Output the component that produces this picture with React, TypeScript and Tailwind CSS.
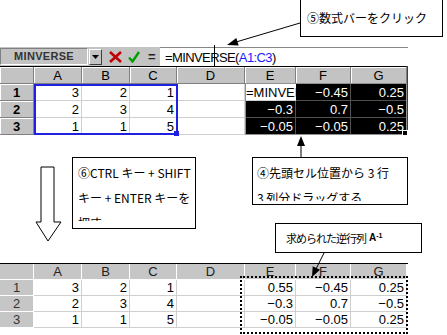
import React from "react";

const COLS = "grid grid-cols-[34px_48px_48px_47px_68px_51px_55px_56px]";
const JP = "font-['Noto_Sans_CJK_JP','Noto_Sans_CJK_SC',sans-serif]";

const letters = ["A", "B", "C", "D", "E", "F", "G"];
const leftData = [
  ["3", "2", "1"],
  ["2", "3", "4"],
  ["1", "1", "5"],
];
const inv = [
  ["0.55", "−0.45", "0.25"],
  ["−0.3", "0.7", "−0.5"],
  ["−0.05", "−0.05", "0.25"],
];

function TopSheet() {
  return (
    <div className="relative w-[408px] border-r-2 border-[#404040]">
      <div className={`${COLS} h-[18px] border-t border-black`}>
        <div className="bg-[#c3c3c3] border-r border-b border-[#808080] shadow-[inset_1px_1px_0_#fff]" />
        {letters.map((l) => (
          <div
            key={l}
            className="bg-[#c3c3c3] border-r border-b border-[#808080] shadow-[inset_1px_1px_0_#fff] flex items-center justify-center text-[13px] leading-none text-black"
          >
            {l}
          </div>
        ))}
      </div>
      {leftData.map((row, r) => (
        <div key={r} className={`${COLS} h-[17px]`}>
          <div className="bg-[#c3c3c3] border-r border-b border-[#808080] shadow-[inset_1px_1px_0_#fff] flex items-center justify-center text-[13px] font-bold leading-none">
            {r + 1}
          </div>
          {row.map((v, c) => (
            <div
              key={c}
              className="bg-white border-r border-b border-[#cfcfcf] flex items-center justify-end pr-[2px] text-[13px] leading-none"
            >
              {v}
            </div>
          ))}
          <div className="bg-white border-r border-b border-[#cfcfcf]" />
          {inv[r].map((v, c) =>
            r === 0 && c === 0 ? (
              <div
                key={c}
                className="bg-white border-b border-[#cfcfcf] overflow-hidden whitespace-nowrap flex items-center text-[13px] leading-none pl-[1px]"
              >
                =MINVERSE(A1:C3)
              </div>
            ) : (
              <div
                key={c}
                className="bg-black text-white border-r border-b border-[#505050] flex items-center justify-end pr-[2px] text-[13px] leading-none"
              >
                {v}
              </div>
            )
          )}
        </div>
      ))}
      {/* selection A1:C3 */}
      <div className="absolute left-[34px] top-[18px] w-[144px] h-[51px] border-2 border-[#2020e0] pointer-events-none" />
      <div className="absolute left-[174px] top-[65px] w-[5px] h-[5px] bg-[#2020e0]" />
      {/* selection E1:G3 */}
      <div className="absolute left-[245px] top-[17px] w-[162px] h-[52px] border border-[#909090] pointer-events-none" />
      <div className="absolute left-[402px] top-[64px] w-[6px] h-[6px] bg-black border border-white" />
    </div>
  );
}

function BottomSheet() {
  return (
    <div className="relative w-[408px] border-t border-black">
      <div className={`${COLS} h-[16px]`}>
        <div className="bg-[#c6c6c6] border-r border-b border-white" />
        {letters.map((l) => (
          <div
            key={l}
            className="bg-[#c6c6c6] border-r border-b border-white flex items-center justify-center text-[13px] leading-none text-[#222]"
          >
            {l}
          </div>
        ))}
      </div>
      {leftData.map((row, r) => (
        <div key={r} className={`${COLS} h-[16px]`}>
          <div className="bg-[#c6c6c6] border-r border-b border-white flex items-center justify-center text-[13px] leading-none text-[#333]">
            {r + 1}
          </div>
          {row.map((v, c) => (
            <div
              key={c}
              className="bg-white border-r border-b border-[#cfcfcf] flex items-center justify-end pr-[2px] text-[13px] leading-none"
            >
              {v}
            </div>
          ))}
          <div className="bg-white border-r border-b border-[#cfcfcf]" />
          {inv[r].map((v, c) => (
            <div
              key={c}
              className="bg-white border-r border-b border-[#cfcfcf] flex items-center justify-end pr-[2px] text-[13px] leading-none"
            >
              {v}
            </div>
          ))}
        </div>
      ))}
    </div>
  );
}

function FormulaBar() {
  return (
    <div className="flex h-[19px] w-[408px]">
      <div className="flex items-center w-[160px] bg-[#c3c3c3]">
        <div className="w-[88px] h-[17px] border border-t-[#808080] border-l-[#808080] border-b-white border-r-white flex items-center justify-center text-[11px] font-bold text-[#333] tracking-[0.3px]">
          MINVERSE
        </div>
        <div className="ml-[1px] w-[13px] h-[16px] bg-[#c3c3c3] border border-t-white border-l-white border-b-[#404040] border-r-[#404040] flex items-center justify-center">
          <svg width="7" height="4" viewBox="0 0 7 4">
            <polygon points="0,0 7,0 3.5,4" fill="black" />
          </svg>
        </div>
        <div className="ml-[6px] w-[14px] flex items-center justify-center">
          <svg width="13" height="12" viewBox="0 0 13 12">
            <path d="M1 1 L12 11 M12 1 L1 11" stroke="#c00000" strokeWidth="2.6" />
          </svg>
        </div>
        <div className="ml-[5px] w-[13px] flex items-center justify-center">
          <svg width="12" height="12" viewBox="0 0 12 12">
            <path d="M1 6.5 L4.5 10.5 L11 1" stroke="#00a000" strokeWidth="2.4" fill="none" />
          </svg>
        </div>
        <div className="ml-[8px] text-[13px] font-bold text-[#222] leading-none">=</div>
      </div>
      <div className="flex-1 bg-white border-t border-[#888] flex items-center pl-[5px] text-[13px] tracking-[-0.6px] leading-none whitespace-nowrap">
        <span>=MINVERSE(</span>
        <span className="text-[#1a1aff]">A1:C3</span>
        <span>)</span>
      </div>
    </div>
  );
}

export default function App() {
  return (
    <div className="relative w-[447px] h-[335px] bg-white overflow-hidden font-['Liberation_Sans',Arial,sans-serif] text-black">
      <div className="h-[47px]" />
      <FormulaBar />
      <TopSheet />
      <div className="h-[128px]" />
      <BottomSheet />

      {/* cursor I-beam */}
      <div className="absolute left-[214px] top-[45px] w-[1px] h-[22px] bg-black" />

      {/* callout ⑤ */}
      <div className={`absolute left-[300px] top-[-1px] w-[143px] h-[38px] bg-white border border-black flex items-center pl-[6px] text-[12px] leading-none ${JP}`}>
        ⑤数式バーをクリック
      </div>

      {/* callout ④ */}
      <div className={`absolute left-[252px] top-[157px] w-[156px] h-[48px] bg-white border border-black pl-[4px] text-[12px] leading-[25px] ${JP}`}>
        <div className="h-[43px] overflow-hidden pt-[2px]">
          <div className="whitespace-nowrap">④先頭セル位置から 3 行</div>
          <div className="whitespace-nowrap">3 列分ドラッグする</div>
        </div>
      </div>

      {/* callout ⑥ */}
      <div className={`absolute left-[72px] top-[157px] w-[124px] h-[72px] bg-white border border-black pl-[5px] text-[12px] leading-[25px] ${JP}`}>
        <div className="h-[63px] overflow-hidden pt-[2px]">
          <div className="whitespace-nowrap">⑥CTRL キー + SHIFT</div>
          <div className="whitespace-nowrap">キー + ENTER キーを</div>
          <div className="whitespace-nowrap">押す</div>
        </div>
      </div>

      {/* callout result */}
      <div className={`absolute left-[275px] top-[223px] w-[147px] h-[30px] bg-white border border-black flex items-center pl-[10px] text-[11px] tracking-[-1px] leading-none ${JP}`}>
        求められた逆行列
        <span className="ml-[3px] font-['Liberation_Sans',sans-serif] font-bold text-[10px] tracking-normal">
          A<sup className="text-[7px]">-1</sup>
        </span>
      </div>

      {/* marching ants selection */}
      <div className="absolute left-[240px] top-[276px] w-[168px] h-[58px] border-2 border-dotted border-black" />

      {/* arrows */}
      <svg className="absolute left-0 top-0 pointer-events-none" width="447" height="335" viewBox="0 0 447 335">
        <line x1="300" y1="23" x2="236" y2="42" stroke="black" strokeWidth="1" />
        <polygon points="227,45 238.7,45.6 236.3,38" fill="black" />
        <line x1="301" y1="157" x2="301" y2="144" stroke="black" strokeWidth="1" />
        <polygon points="301,136 297,146 305,146" fill="black" />
        <line x1="324" y1="253" x2="316" y2="269" stroke="black" strokeWidth="1" />
        <polygon points="312,277 320,269.7 312.7,266.3" fill="black" />
        <polygon
          points="41,167 54,167 54,222 61,222 48,241 36,222 41,222"
          fill="white"
          stroke="black"
          strokeWidth="1"
        />
      </svg>
    </div>
  );
}
